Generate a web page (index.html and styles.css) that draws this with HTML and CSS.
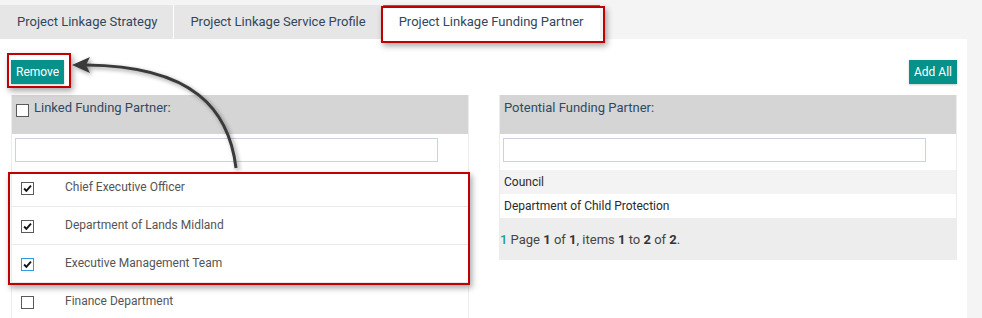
FILE: index.html
```html
<!DOCTYPE html>
<html lang="en">
<head>
    <meta charset="UTF-8">
    <title>Project Linkage Funding Partner</title>
    <link rel="stylesheet" href="styles.css">
</head>
<body>
    <div class="tabs">
        <div class="tab">Project Linkage Strategy</div>
        <div class="tab">Project Linkage Service Profile</div>
        <div class="tab active">Project Linkage Funding Partner</div>
    </div>
    <div class="panel">
        <div class="toolbar">
            <button type="button" class="btn">Remove</button>
            <button type="button" class="btn">Add All</button>
        </div>
        <div class="columns">
            <div class="col">
                <div class="col-head"><span class="check"></span>Linked Funding Partner:</div>
                <div class="search"><input type="text"></div>
                <ul class="linked">
                    <li>
                        <span class="check checked"><svg viewBox="0 0 13 13"><path d="M2.5 6.5 L5.2 9.4 L10.6 3.2" /></svg></span>
                        <span class="name">Chief Executive Officer</span>
                    </li>
                    <li>
                        <span class="check checked"><svg viewBox="0 0 13 13"><path d="M2.5 6.5 L5.2 9.4 L10.6 3.2" /></svg></span>
                        <span class="name">Department of Lands Midland</span>
                    </li>
                    <li>
                        <span class="check checked focus"><svg viewBox="0 0 13 13"><path d="M2.5 6.5 L5.2 9.4 L10.6 3.2" /></svg></span>
                        <span class="name">Executive Management Team</span>
                    </li>
                    <li>
                        <span class="check"></span>
                        <span class="name">Finance Department</span>
                    </li>
                </ul>
            </div>
            <div class="col col-right">
                <div class="col-head">Potential Funding Partner:</div>
                <div class="search"><input type="text"></div>
                <ul class="potential">
                    <li class="alt">Council</li>
                    <li>Department of Child Protection</li>
                </ul>
                <div class="pager"><a href="#">1</a> Page <b>1</b> of <b>1</b>, items <b>1</b> to <b>2</b> of <b>2</b>.</div>
            </div>
        </div>
    </div>

    <!-- annotation overlay -->
    <div class="mark mark-tab"></div>
    <div class="mark mark-remove"></div>
    <div class="mark mark-rows"></div>
    <svg class="arrow" width="982" height="318" viewBox="0 0 982 318">
        <path d="M236 168 C229 110 194 66 86 65" fill="none" stroke="#3a3a3a" stroke-width="3" />
        <polygon points="72,65 90,57 86,65 90,73" fill="#3a3a3a" />
    </svg>
</body>
</html>
```
FILE: styles.css
```css
body {
    margin: 0;
    background-color: #f4f4f4;
    font-family: Roboto, 'Liberation Sans', sans-serif;
    font-size: 13px;
    overflow: hidden;
    height: 318px;
    position: relative;
}
.tabs {
    display: flex;
    padding-top: 5px;
}
.tab {
    height: 34px;
    line-height: 34px;
    padding: 0 16px 0 17px;
    background-color: #e6e6e6;
    border-right: 1px solid #ffffff;
    color: #30475e;
}
.tab + .tab {
    padding-left: 16px;
}
.tab.active {
    background-color: #ffffff;
    border-top: 1px solid #4d7c85;
    border-right: none;
    height: 33px;
    line-height: 32px;
}
.panel {
    width: 967px;
    box-sizing: border-box;
    min-height: 279px;
    background-color: #ffffff;
    padding: 0 10px 0 11px;
}
.toolbar {
    display: flex;
    justify-content: space-between;
    padding-top: 21px;
    margin-bottom: 11px;
}
.btn {
    height: 24px;
    padding: 0 5px;
    border: none;
    background-color: #07918b;
    color: #ffffff;
    font-family: Roboto, 'Liberation Sans', sans-serif;
    font-size: 12px;
    box-shadow: 0 1px 2px rgba(0, 0, 0, 0.2);
    cursor: pointer;
}
.columns {
    display: flex;
    gap: 30px;
    align-items: flex-start;
}
.col {
    width: 458px;
    box-sizing: border-box;
    border-left: 1px solid #ececec;
    border-right: 1px solid #ececec;
    min-height: 230px;
}
.col-right {
    min-height: 0;
}
.col-head {
    height: 39px;
    box-sizing: border-box;
    padding: 5px 5px 0 4px;
    background-color: #d5d5d5;
    color: #2f4a62;
    line-height: 16px;
    display: flex;
    align-items: flex-start;
}
.col-head .check {
    margin: 4px 5px 0 0;
}
.search {
    padding: 4px 0 0 3px;
}
.search input {
    width: 423px;
    height: 24px;
    box-sizing: border-box;
    border: 1px solid #c9d3dd;
    margin: 0;
    outline: none;
}
.check {
    width: 13px;
    height: 13px;
    box-sizing: border-box;
    border: 1px solid #5a5a5a;
    background-color: #ffffff;
    display: inline-block;
    flex: none;
}
.check svg {
    display: block;
    width: 11px;
    height: 11px;
}
.check path {
    fill: none;
    stroke: #111111;
    stroke-width: 2.2;
}
.check.focus {
    border-color: #2f9ae0;
}
ul {
    list-style: none;
    margin: 0;
    padding: 0;
}
.linked {
    margin-top: 7px;
}
.linked li {
    display: flex;
    height: 38px;
    box-sizing: border-box;
    border-bottom: 1px solid #e9e9e9;
}
.linked .check {
    margin: 13px 0 0 9px;
}
.linked .name {
    margin: 11px 0 0 31px;
    font-size: 12px;
    line-height: 14px;
    color: #555555;
}
.potential {
    margin-top: 8px;
}
.potential li {
    height: 24px;
    line-height: 25px;
    padding: 0 4px;
    font-size: 12px;
    color: #2a2a2a;
}
.potential li.alt {
    background-color: #f3f3f3;
}
.pager {
    height: 42px;
    line-height: 44px;
    background-color: #ededed;
    color: #444444;
}
.pager a {
    color: #1e9a94;
    text-decoration: none;
    font-weight: 500;
}
.pager b {
    color: #333333;
}
.mark {
    position: absolute;
    box-sizing: border-box;
    border: 2px solid #c00000;
    box-shadow: 2px 3px 6px rgba(0, 0, 0, 0.35);
}
.mark-tab {
    left: 381px;
    top: 6px;
    width: 224px;
    height: 37px;
}
.mark-remove {
    left: 7px;
    top: 53px;
    width: 64px;
    height: 35px;
}
.mark-rows {
    left: 8px;
    top: 172px;
    width: 462px;
    height: 113px;
}
.arrow {
    position: absolute;
    left: 0;
    top: 0;
    pointer-events: none;
    filter: drop-shadow(2px 2px 2px rgba(0, 0, 0, 0.4));
}
```
